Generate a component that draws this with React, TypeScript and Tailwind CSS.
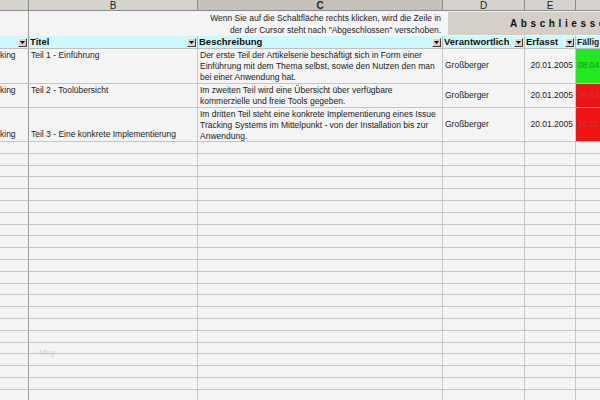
import React from "react";

const W = { a: "w-[29px]", b: "w-[169px]", c: "w-[245px]", d: "w-[82px]", e: "w-[51px]", f: "flex-1" };

function Drop() {
  return (
    <div className="w-[9px] h-[9px] shrink-0 bg-[#d4d0c8] border-t border-l border-t-[#f4f4f4] border-l-[#f4f4f4] border-r border-b border-r-[#404040] border-b-[#404040] flex items-center justify-center">
      <svg width="5" height="3" viewBox="0 0 5 3"><path d="M0 0h5L2.5 3z" fill="#000" /></svg>
    </div>
  );
}

function HCell({ w, label, drop = true }: { w: string; label: string; drop?: boolean }) {
  return (
    <div className={`${w} h-full flex items-center justify-between pl-[1px] pr-[1px] border-r border-[#b8b8b8]`}>
      <span className="font-bold text-[9.5px] leading-none text-[#111] whitespace-nowrap overflow-hidden">{label}</span>
      {drop && <Drop />}
    </div>
  );
}

export default function App() {
  const font = { fontFamily: '"Liberation Sans", Arial, sans-serif' };
  const empty = Array.from({ length: 22 });
  return (
    <div className="w-[600px] h-[400px] overflow-hidden bg-[#f4f4f4] text-[#1a1a1a]" style={font}>
      {/* column letters */}
      <div className="flex h-[11px] bg-[#d6d3ce] border-b border-[#8a8a8a] text-[10px] leading-[11px] text-[#222]">
        <div className={`${W.a} border-r border-[#8a8a8a]`} />
        <div className={`${W.b} border-r border-[#8a8a8a] text-center`}>B</div>
        <div className={`${W.c} border-r border-[#8a8a8a] text-center bg-[#c6c2ba] font-bold`}>C</div>
        <div className={`${W.d} border-r border-[#8a8a8a] text-center`}>D</div>
        <div className={`${W.e} border-r border-[#8a8a8a] text-center`}>E</div>
        <div className={`${W.f}`} />
      </div>

      {/* note row + button */}
      <div className="flex h-[25px]">
        <div className={`${W.a} border-r border-[#9a9a9a]`} />
        <div className={`${W.b}`} />
        <div className={`${W.c} pr-[2px] flex flex-col items-end justify-center text-[8.5px] leading-[12px] text-[#222] whitespace-nowrap`}>
          <span>Wenn Sie auf die Schaltfläche rechts klicken, wird die Zeile in</span>
          <span>der der Cursor steht nach "Abgeschlossen" verschoben.</span>
        </div>
        <div className="w-[5px]" />
        <div className="flex-1 my-[1px] bg-[#d4d0c8] flex items-center pl-[62px] overflow-hidden whitespace-nowrap">
          <span className="font-bold text-[10px] tracking-[3.6px] text-[#111]">Abschliessen</span>
        </div>
      </div>

      {/* header row */}
      <div className="flex h-[13px] bg-[#ccfafa] border-b border-[#c0c0c0]">
        <div className={`${W.a} h-full flex items-center justify-end pr-[1px] border-r border-[#9a9a9a]`}>
          <Drop />
        </div>
        <HCell w={W.b} label="Titel" />
        <HCell w={W.c} label="Beschreibung" />
        <HCell w={W.d} label="Verantwortlich" />
        <HCell w={W.e} label="Erfasst" />
        <div className="flex-1 h-full flex items-center pl-[1px] bg-[#ccfafa] overflow-hidden">
          <span className="font-bold text-[8.5px] leading-none whitespace-nowrap">Fällig</span>
        </div>
      </div>

      {/* data rows */}
      {[
        {
          h: "h-[35px]",
          titel: "Teil 1 - Einführung",
          tAlign: "justify-start",
          desc: [
            "Der erste Teil der Artikelserie beschäftigt sich in Form einer",
            "Einführung mit dem Thema selbst, sowie den Nutzen den man",
            "bei einer Anwendung hat.",
          ],
          f: "08.04",
          fbg: "bg-[#22e822]",
          fc: "text-[#1d8a1d]",
        },
        {
          h: "h-[24px]",
          titel: "Teil 2 - Toolübersicht",
          tAlign: "justify-start",
          desc: ["Im zweiten Teil wird eine Übersicht über verfügbare", "kommerzielle und freie Tools gegeben."],
          f: "29.04",
          fbg: "bg-[#ee1414]",
          fc: "text-[#c83a3a]",
        },
        {
          h: "h-[34px]",
          titel: "Teil 3 - Eine konkrete Implementierung",
          tAlign: "justify-end",
          desc: [
            "Im dritten Teil steht eine konkrete Implementierung eines Issue",
            "Tracking Systems im Mittelpunkt - von der Installation bis zur",
            "Anwendung.",
          ],
          f: "16.05",
          fbg: "bg-[#ee1414]",
          fc: "text-[#c83a3a]",
        },
      ].map((r, i) => (
        <div key={i} className={`flex ${r.h} border-b border-[#c4c4c4] text-[8.5px] leading-[11.2px] whitespace-nowrap`}>
          <div className={`${W.a} flex flex-col ${r.tAlign} border-r border-[#9a9a9a] pt-[1px] pb-[1px] overflow-hidden`}>
            <span>king</span>
          </div>
          <div className={`${W.b} flex flex-col ${r.tAlign} pl-[2px] pt-[1px] pb-[1px] border-r border-[#c8c8c8]`}>
            <span>{r.titel}</span>
          </div>
          <div className={`${W.c} flex flex-col pl-[2px] pt-[1px] border-r border-[#c8c8c8] overflow-hidden`}>
            {r.desc.map((d, j) => (
              <span key={j}>{d}</span>
            ))}
          </div>
          <div className={`${W.d} flex items-center pl-[2px] border-r border-[#c8c8c8]`}>Großberger</div>
          <div className={`${W.e} flex items-center justify-end pr-[2px] border-r border-[#c8c8c8]`}>20.01.2005</div>
          <div className={`flex-1 flex items-center pl-[2px] ${r.fbg} ${r.fc}`}>{r.f}</div>
        </div>
      ))}

      {/* empty rows */}
      {empty.map((_, i) => (
        <div key={i} className="flex h-[11.8px] border-b border-[#c4c4c4]">
          <div className={`${W.a} border-r border-[#9a9a9a]`} />
          <div className={`${W.b} border-r border-[#c8c8c8] pl-[10px] pt-[4px] text-[8px] leading-[11px] text-[#d0d0d0] whitespace-nowrap`}>
            {i === 17 ? "Mbg" : ""}
          </div>
          <div className={`${W.c} border-r border-[#c8c8c8]`} />
          <div className={`${W.d} border-r border-[#c8c8c8]`} />
          <div className={`${W.e} border-r border-[#c8c8c8]`} />
          <div className="flex-1" />
        </div>
      ))}
    </div>
  );
}
